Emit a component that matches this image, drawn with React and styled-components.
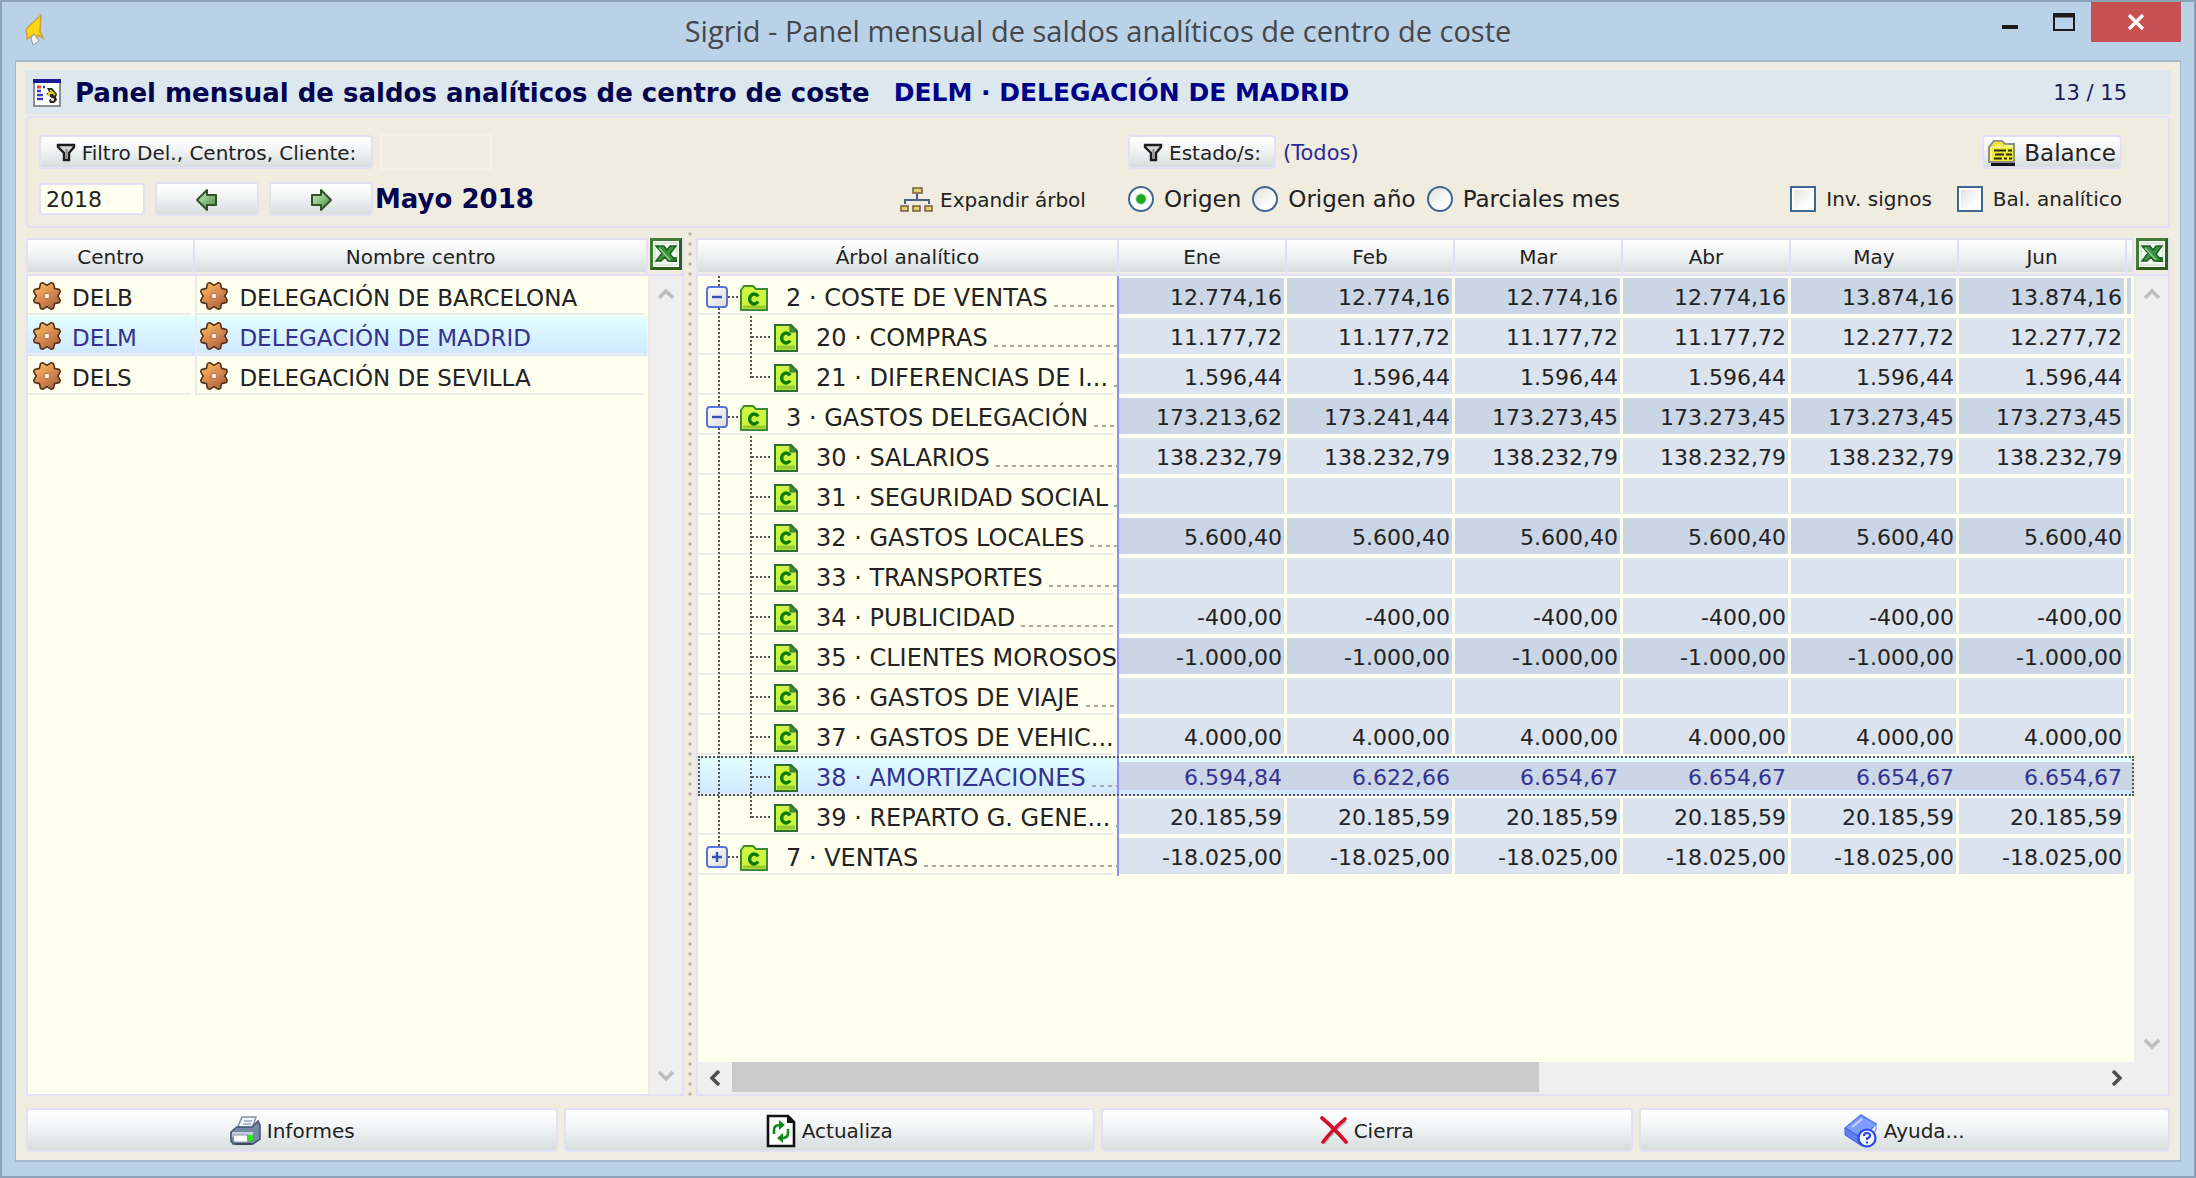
import React, { useState } from "react";
import styled, { createGlobalStyle, css } from "styled-components";

const ivory = "#fffff0";
const beige = "#f0ede0";
const lavender = "#e2e0f6";
const face = "linear-gradient(#ffffff, #f4f5f6 40%, #d5dedd)";
const selection = "linear-gradient(#e3ffff, #cfe6ff)";

const GlobalStyle = createGlobalStyle`
  * { box-sizing: border-box; }
  body {
    margin: 0;
    font-family: "DejaVu Sans", Verdana, sans-serif;
    font-size: 22px;
    color: #222222;
  }
  button, input { font: inherit; color: inherit; margin: 0; }
`;

/* ---------- window frame ---------- */

const Window = styled.div`
  display: flex;
  flex-direction: column;
  height: 100vh;
  min-width: 1800px;
  padding: 0 13px 14px;
  background: #bad2e8;
  border: 2px solid #8ba2b8;
`;

const TitleBar = styled.header`
  display: grid;
  grid-template-columns: 1fr auto 1fr;
  flex: none;
  height: 58px;
`;

const AppMark = styled.div`
  padding: 10px 0 0 8px;
`;

const WindowTitle = styled.h1`
  margin: 0;
  font-family: "Open Sans", "Segoe UI", sans-serif;
  font-size: 29px;
  font-weight: 400;
  line-height: 58px;
  color: #44484c;
`;

const WindowControls = styled.div`
  display: flex;
  justify-content: flex-end;
  align-items: flex-start;
`;

const ControlButton = styled.button`
  display: flex;
  align-items: center;
  justify-content: center;
  width: ${(p) => (p.$close ? 90 : 54)}px;
  height: 40px;
  padding: 0;
  border: 0;
  color: ${(p) => (p.$close ? "#ffffff" : "#1c1c1c")};
  background: ${(p) => (p.$close ? "#c75050" : "transparent")};
`;

const Client = styled.main`
  display: flex;
  flex-direction: column;
  flex: 1;
  min-height: 0;
  padding: 8px 9px;
  background: ${beige};
  border: 2px solid #a3b9cc;
  border-width: 2px 1px;
`;

/* ---------- heading ---------- */

const Heading = styled.div`
  display: flex;
  align-items: center;
  flex: none;
  height: 44px;
  padding: 2px 44px 0 8px;
  background: #dce8ee;
`;

const PanelTitle = styled.h2`
  margin: 0 24px 0 14px;
  font-size: 26px;
  line-height: 32px;
  color: #04044e;
`;

const Subject = styled.strong`
  flex: 1;
  font-size: 25px;
  line-height: 32px;
  color: #000088;
`;

const Counter = styled.span`
  font-size: 21px;
  color: #1a1a5c;
`;

/* ---------- filter bar ---------- */

const Filters = styled.section`
  display: grid;
  grid-template-columns: 861fr 228fr 994fr;
  grid-template-rows: 36px 34px;
  row-gap: 12px;
  align-items: center;
  flex: none;
  height: 112px;
  margin: 2px 1px 0;
  padding: 16px 46px 10px 11px;
  border: 2px solid ${lavender};
  border-radius: 4px;
`;

const Group = styled.div`
  display: flex;
  align-items: center;
  justify-content: ${(p) => (p.$spread ? "space-between" : "flex-start")};
  gap: ${(p) => p.$gap || 10}px;
  grid-column: ${(p) => p.$column};
  white-space: nowrap;
`;

const PushButton = styled.button`
  display: flex;
  align-items: center;
  justify-content: center;
  gap: ${(p) => (p.$large ? 8 : 6)}px;
  min-width: ${(p) => p.$width || 0}px;
  height: 34px;
  padding: ${(p) => (p.$large ? "2px 4px 0" : "2px 8px 0")};
  font-size: ${(p) => (p.$large ? 23 : 20)}px;
  line-height: 28px;
  white-space: nowrap;
  background: ${face};
  border: 2px solid ${lavender};
  border-radius: 4px;
`;

const PlainButton = styled(PushButton)`
  justify-content: flex-start;
  padding: 2px 0 0;
  background: none;
  border: 0;
`;

const TextInput = styled.input`
  width: ${(p) => p.$width}px;
  height: ${(p) => (p.$flat ? 36 : 32)}px;
  padding: 0 5px;
  background: ${(p) => (p.$flat ? "transparent" : ivory)};
  border: 2px solid ${(p) => (p.$flat ? "#f5f2e8" : lavender)};
  border-radius: 4px;
`;

const Period = styled.strong`
  margin-left: -8px;
  font-size: 26px;
  line-height: 32px;
  color: #04044e;
`;

const StateValue = styled.span`
  padding-top: 2px;
  font-size: 21px;
  color: #2a2a9c;
`;

const Choice = styled.label`
  display: flex;
  align-items: center;
  gap: 10px;
  font-size: ${(p) => (p.$small ? 20 : 23)}px;
  line-height: 28px;
`;

const boxLook = css`
  appearance: none;
  flex: none;
  width: 26px;
  height: 26px;
  border: 2px solid #3d6892;
`;

const Radio = styled.input.attrs({ type: "radio" })`
  ${boxLook}
  border-radius: 50%;
  background: linear-gradient(135deg, #dcdcd8, #ffffff 70%);
  &:checked {
    background: radial-gradient(circle, #1fa81f 0 4px, #8fd88f 5px, #ffffff 6px);
  }
`;

const Check = styled.input.attrs({ type: "checkbox" })`
  ${boxLook}
  background: linear-gradient(135deg, #dcdcd8, #ffffff 70%);
  box-shadow: inset 0 0 0 2px #ffffff;
  &:checked { background: #1fa81f; }
`;

/* ---------- data panels ---------- */

const Workspace = styled.div`
  display: flex;
  flex: 1;
  min-height: 0;
  margin: 0 1px;
`;

const Panel = styled.section`
  display: flex;
  flex-direction: column;
  flex: ${(p) => (p.$width ? `0 0 ${p.$width}px` : "1")};
  min-width: 0;
  margin-top: 10px;
  background: ${beige};
  border: solid ${lavender};
  border-width: 0 2px 2px;
`;

const PanelTop = styled.div`
  display: flex;
  flex: 1;
  min-height: 0;
`;

const Sheet = styled.div`
  flex: 1;
  min-width: 0;
  overflow: hidden;
  background: ${ivory};
`;

const Side = styled.div`
  display: flex;
  flex-direction: column;
  flex: none;
  width: 34px;
`;

const ExcelButton = styled.button`
  display: block;
  flex: none;
  width: 34px;
  height: 38px;
  padding: 0 0 4px 1px;
  line-height: 0;
  background: none;
  border: 0;
  border-bottom: 2px solid ${lavender};
`;

const VerticalTrack = styled.div`
  display: flex;
  flex-direction: column;
  justify-content: space-between;
  flex: 1;
  margin-left: 2px;
  background: #efefef;
`;

const HorizontalTrack = styled.div`
  display: flex;
  flex: none;
  height: 32px;
  padding-right: 34px;
  background: #efefef;
`;

const ArrowButton = styled.button`
  display: flex;
  align-items: center;
  justify-content: center;
  flex: none;
  width: ${(p) => (p.$wide ? 34 : 32)}px;
  height: ${(p) => (p.$wide ? 32 : 36)}px;
  padding: 0;
  background: none;
  border: 0;
`;

const Slot = styled.div`
  flex: 1;
  height: 30px;
`;

const Thumb = styled.div`
  width: 59%;
  height: 100%;
  background: #cbcbcb;
`;

const Splitter = styled.div`
  flex: none;
  width: 12px;
  margin-top: 4px;
  background: radial-gradient(circle at 6px 2px, #b4b0a4 0 1px, transparent 2px) 0 0 / 12px 10px repeat-y;
`;

const Grid = styled.table`
  width: 100%;
  table-layout: fixed;
  border-collapse: separate;
  border-spacing: 0;
`;

const Head = styled.th`
  height: 38px;
  padding: 0;
  font-size: 20px;
  font-weight: 400;
  line-height: 30px;
  background: ${face} 0 0 / 100% 32px no-repeat ${beige};
  border: solid ${lavender};
  border-width: 2px 2px 2px 0;
`;

const Row = styled.tr`
  color: ${(p) => (p.$selected ? "#33338f" : "inherit")};
  background: ${(p) => (p.$selected ? selection : "none")};
  ${(p) => p.$focused && "outline: 2px dotted #555555; outline-offset: -2px;"}
`;

const CentreCell = styled.td`
  height: 40px;
  padding: 0;
  border-left: ${(p) => (p.$divided ? "2px solid #ececec" : "0")};
`;

const CentreLabel = styled.div`
  display: flex;
  align-items: center;
  gap: 10px;
  height: 40px;
  padding-left: ${(p) => (p.$near ? 2 : 4)}px;
  font-size: 23px;
  line-height: 32px;
  white-space: nowrap;
  background: linear-gradient(#ebebeb, #ebebeb) 0 37px / calc(100% - 4px) 2px no-repeat;
  span { padding-top: 4px; }
`;

const TreeCell = styled.td`
  height: 40px;
  padding: 0;
  border-right: 2px solid #8f8ff8;
`;

const TreeLabel = styled.div`
  display: flex;
  align-items: center;
  height: 40px;
  font-size: 24px;
  line-height: 32px;
  white-space: nowrap;
  overflow: hidden;
  background: linear-gradient(#ebebeb, #ebebeb) 0 37px / calc(100% - 4px) 2px no-repeat;
  > svg { flex: none; margin-top: 4px; }
`;

const dotsDown = "repeating-linear-gradient(#555 0 2px, transparent 2px 4px)";
const dotsAcross = "repeating-linear-gradient(90deg, #555 0 2px, transparent 2px 4px)";

const RootGuide = styled.span`
  display: flex;
  align-items: center;
  flex: none;
  width: 42px;
  height: 40px;
  padding: 2px 0 0 8px;
  background:
    ${dotsDown} 20px 0 / 2px ${(p) => (p.$ends ? "20px" : "40px")} no-repeat,
    ${dotsAcross} 30px 20px / ${(p) => (p.$node ? 12 : 0)}px 2px no-repeat;
`;

const BranchGuide = styled.span`
  flex: none;
  width: 34px;
  height: 40px;
  background:
    ${dotsDown} 10px 0 / 2px ${(p) => (p.$ends ? "22px" : "40px")} no-repeat,
    ${dotsAcross} 12px 20px / 20px 2px no-repeat;
`;

const Expander = styled.button`
  display: block;
  width: 22px;
  height: 22px;
  padding: 0;
  line-height: 0;
  background: linear-gradient(135deg, #ffffff, #dcdcdc);
  border: 2px solid #5577dd;
  border-radius: 4px;
`;

const TreeText = styled.span`
  flex: none;
  margin: 4px 6px 0 18px;
`;

const Leader = styled.span`
  flex: 1;
  align-self: flex-end;
  height: 2px;
  margin-bottom: 9px;
  background: repeating-linear-gradient(90deg, #aaaaa4 0 4px, transparent 4px 8px);
`;

const Amount = styled.td`
  height: 40px;
  padding: 4px 2px 0 0;
  line-height: 24px;
  text-align: right;
  white-space: nowrap;
  background: ${(p) => (p.$dark ? "#cad5e5" : "#dbe3ee")};
  background-clip: padding-box;
  border: solid transparent;
  border-width: ${(p) => (p.$selected ? "6px 0" : "2px 3px 2px 0")};
  ${(p) => p.$selected && "padding-right: 5px;"}
`;

/* ---------- bottom bar ---------- */

const Actions = styled.footer`
  display: grid;
  grid-template-columns: repeat(4, 1fr);
  gap: 6px;
  flex: none;
  margin: 12px 1px 0;
`;

const ActionButton = styled(PushButton)`
  height: 44px;
`;

/* ---------- drawings ---------- */

const FlameIcon = () => (
  <svg width="24" height="38" viewBox="0 0 24 36" aria-hidden="true">
    <path d="M18 2 L5 14 Q2 17 4 21 L4 26 L10 22 L13 26 L15 22 L20 25 L17 18 Z" fill="#ffd416" stroke="#c9a23c" strokeWidth="1.5" />
    <path d="M8 25 L11 21 L16 28 L10 32 Z" fill="#f4f6f8" stroke="#8f9ba6" />
  </svg>
);

const ReportIcon = () => (
  <svg width="28" height="28" viewBox="0 0 28 28" aria-hidden="true">
    <rect x="1" y="1" width="26" height="26" fill="#fff" stroke="#8c8c94" strokeWidth="2" />
    <rect x="0" y="0" width="28" height="4" fill="#1c1c96" />
    <path d="M4 8h4" stroke="#f04040" strokeWidth="3" />
    <path d="M4 12h4M4 16h6M4 20h6M10 8h2" stroke="#3a3ab8" strokeWidth="2.4" />
    <path d="M14 9h5l5 6-1 3 1 3-3 3h-4l-1-3 3-2-6-4 3-2z" fill="#26261c" />
    <path d="M15 14h4M17 11l5 5M14 16h3" stroke="#d8d040" strokeWidth="1.800" />
    <circle cx="19.500" cy="20.500" r="1.6" fill="#fff" />
  </svg>
);

const FunnelIcon = () => (
  <svg width="20" height="20" viewBox="0 0 20 20" aria-hidden="true">
    <path d="M2 2h16v2l-5 6v7H8v-7L2 4z" fill="#d8d8d8" stroke="#1c1c1c" strokeWidth="2.4" />
    <path d="M10.500 6v10" stroke="#8a8a8a" strokeWidth="2" />
  </svg>
);

const Arrow = ({ flip }) => (
  <svg width="24" height="24" viewBox="0 0 24 24" aria-hidden="true">
    <defs>
      <linearGradient id={flip ? "arrowL" : "arrowR"} x1="0" y1="0" x2="1" y2="1">
        <stop offset="0" stopColor="#d4f0c8" />
        <stop offset="1" stopColor="#3f8f34" />
      </linearGradient>
    </defs>
    <path
      d={flip ? "M2 12L12 2v5h9v10h-9v5z" : "M22 12L12 2v5H3v10h9v5z"}
      fill={`url(#${flip ? "arrowL" : "arrowR"})`}
      stroke="#34502e"
      strokeWidth="2"
      strokeLinejoin="round"
    />
  </svg>
);

const HierarchyIcon = () => (
  <svg width="34" height="26" viewBox="0 0 34 26" aria-hidden="true">
    <path d="M17 7v6M5 17v-4h24v4" stroke="#4b5f80" strokeWidth="2" fill="none" />
    <g fill="#e2cf74" stroke="#7d654a" strokeWidth="1.600">
      <rect x="13" y="1" width="9" height="5" />
      <rect x="1" y="19" width="7" height="5" />
      <rect x="13" y="19" width="7" height="5" />
      <rect x="25" y="19" width="7" height="5" />
    </g>
  </svg>
);

const BalanceIcon = () => (
  <svg width="28" height="28" viewBox="0 0 28 28" aria-hidden="true">
    <path d="M1 23V8l5-6h8l3 3h9v18z" fill="#f3f38a" stroke="#8d8d8d" strokeWidth="2" />
    <path d="M5 7l3-3h5l3 3" fill="none" stroke="#e6e000" strokeWidth="3" strokeDasharray="2 1" />
    <rect x="4" y="9" width="21" height="13" fill="#ecec38" />
    <path d="M6 11.500h12M20 11.500h4M7 15.500h9M18 15.500h6M6 19.500h8M16 19.500h3M21 19.500h3" stroke="#2a2a10" strokeWidth="2.2" />
    <path d="M3 25.500h24" stroke="#111" strokeWidth="3" />
  </svg>
);

const ExcelIcon = () => (
  <svg width="32" height="32" viewBox="0 0 32 32" aria-hidden="true">
    <rect x="0" y="0" width="32" height="32" fill="#3f7d36" />
    <path d="M32 0v32H0l3-3h26V3z" fill="#2a5f1c" />
    <rect x="3" y="3" width="26" height="26" fill="#fff" />
    <rect x="5" y="5" width="22" height="22" fill="#f1f8f0" stroke="#c4dcc0" />
    <path d="M18 19h9v5h-6z" fill="#2c7a34" />
    <path d="M6 8h8l3 4 3-4h6l-6 8 6 7h-8l-3-4-4 4H6l6-8z" fill="#3d9440" stroke="#1d5c24" strokeWidth="1.400" />
    <path d="M9 10l11 12" stroke="#8ccc88" strokeWidth="1.500" />
  </svg>
);

const GEAR = Array.from({ length: 40 }, (_, i) => {
  const r = [14, 14, 12, 10.8, 12][i % 5];
  const a = ((i - 0.5) * Math.PI) / 20 + Math.PI / 8;
  return `${(15 + r * Math.cos(a)).toFixed(1)},${(15 + r * Math.sin(a)).toFixed(1)}`;
}).join(" ");

const GearIcon = () => (
  <svg width="30" height="30" viewBox="0 0 30 30" aria-hidden="true">
    <defs>
      <linearGradient id="copper" x1="0.1" y1="0" x2="0.8" y2="1">
        <stop offset="0" stopColor="#ffc45c" />
        <stop offset="0.5" stopColor="#d98a50" />
        <stop offset="1" stopColor="#a8643c" />
      </linearGradient>
    </defs>
    <polygon points={GEAR} fill="url(#copper)" stroke="#55321c" strokeWidth="1.6" strokeLinejoin="round" />
    <circle cx="15" cy="15" r="2.800" fill="#fff6e8" stroke="#b07850" />
  </svg>
);

const LetterC = ({ x, y }) => (
  <path d={`M${x + 9} ${y + 3.500}A4.500 5 0 1 0 ${x + 9} ${y + 8.500}`} fill="none" stroke="#0a7a0a" strokeWidth="3.400" />
);

const FolderIcon = () => (
  <svg width="28" height="26" viewBox="0 0 28 26" aria-hidden="true">
    <path d="M1 25V5l3-4h9l3 3h11v21z" fill="#cdf53e" stroke="#3f8a34" strokeWidth="2" />
    <path d="M3 22h23" stroke="#94cc30" strokeWidth="3" />
    <LetterC x={9} y={8} />
  </svg>
);

const LeafIcon = () => (
  <svg width="24" height="28" viewBox="0 0 24 28" aria-hidden="true">
    <path d="M1 1h16l6 6v20H1z" fill="#cdf53e" stroke="#2f6e34" strokeWidth="2" />
    <path d="M16 1v7h7z" fill="#4a8c3a" stroke="#2f6e34" />
    <path d="M3 23.500h18" stroke="#94cc30" strokeWidth="4" />
    <LetterC x={7} y={8} />
  </svg>
);

const PrinterIcon = () => (
  <svg width="32" height="32" viewBox="0 0 32 32" aria-hidden="true">
    <path d="M8 14L13 2h14l-4 12z" fill="#f2f6fb" stroke="#8492a8" strokeWidth="1.5" />
    <path d="M15 6h8M14 9h8" stroke="#9aa8bc" strokeWidth="1.500" />
    <path d="M2 17l6-5h15l6-6 2 4v14l-7 5H4l-2-3z" fill="#7688a4" stroke="#42516a" strokeWidth="1.5" />
    <path d="M3 17h21v5H3z" fill="#c2cedd" />
    <path d="M4 20h15v7H5z" fill="#fff" stroke="#8492a8" />
    <rect x="18" y="20" width="6" height="6" fill="#2fe01c" />
    <path d="M6 29h17" stroke="#3c4a60" strokeWidth="2" />
  </svg>
);

const RefreshIcon = () => (
  <svg width="30" height="34" viewBox="0 0 30 34" aria-hidden="true">
    <path d="M2 2h20l6 6v24H2z" fill="#fff" stroke="#111" strokeWidth="2.600" />
    <path d="M21 2v7h7z" fill="#111" />
    <path d="M8 20v-4q0-5 6-5M22 15v4q0 5-6 5" fill="none" stroke="#0c8c14" strokeWidth="2.600" />
    <path d="M13 6l6 5-6 5zM17 19l-6 5 6 5z" fill="#0c8c14" />
  </svg>
);

const CrossIcon = () => (
  <svg width="28" height="30" viewBox="0 0 28 30" aria-hidden="true">
    <path d="M4 27Q14 14 26 5" fill="none" stroke="#777" strokeWidth="3" opacity="0.5" />
    <path d="M2 2Q14 12 26 26" fill="none" stroke="#d40f2c" strokeWidth="3.600" strokeLinecap="round" />
    <path d="M25 3Q12 14 3 26" fill="none" stroke="#d40f2c" strokeWidth="3.600" strokeLinecap="round" />
  </svg>
);

const HelpIcon = () => (
  <svg width="34" height="34" viewBox="0 0 34 34" aria-hidden="true">
    <path d="M1 14L17 1l15 9-13 15z" fill="#7f9cff" stroke="#5a7af0" strokeWidth="1.500" />
    <path d="M1 14v7l17 11 1-7z" fill="#5c80f4" stroke="#3f62dc" />
    <path d="M19 25L32 10v6L20 31z" fill="#dfe6ff" stroke="#5a7af0" />
    <path d="M8 13l10-8" stroke="#c6d3ff" strokeWidth="2" />
    <circle cx="23" cy="24" r="8.500" fill="#f4f7ff" stroke="#2448e0" strokeWidth="2.200" />
    <path d="M20 22q0-3 3-3t3 2.500q0 2-3 3v1.500M23 27.500v2" fill="none" stroke="#2448e0" strokeWidth="2.200" />
  </svg>
);

const Chevron = ({ dir, color }) => {
  const turn = { up: 0, right: 90, down: 180, left: 270 }[dir];
  return (
    <svg width="20" height="20" viewBox="0 0 20 20" aria-hidden="true">
      <path d="M3 14L10 7l7 7" fill="none" stroke={color} strokeWidth="3.600" transform={`rotate(${turn} 10 10)`} />
    </svg>
  );
};

const ExpandMark = ({ open }) => (
  <svg width="18" height="18" viewBox="0 0 18 18" aria-hidden="true">
    <path d={open ? "M4 9h10" : "M4 9h10M9 4v10"} stroke="#2f50b4" strokeWidth="2.400" />
  </svg>
);

const MinimizeMark = () => (
  <svg width="18" height="18" viewBox="0 0 18 18" aria-hidden="true">
    <path d="M1 14h16" stroke="currentColor" strokeWidth="4" />
  </svg>
);

const MaximizeMark = () => (
  <svg width="22" height="18" viewBox="0 0 22 18" aria-hidden="true">
    <rect x="1" y="1" width="20" height="16" fill="none" stroke="currentColor" strokeWidth="2" />
    <path d="M0 2.500h22" stroke="currentColor" strokeWidth="4" />
  </svg>
);

const CloseMark = () => (
  <svg width="18" height="16" viewBox="0 0 18 16" aria-hidden="true">
    <path d="M2 1l14 14M16 1L2 15" stroke="currentColor" strokeWidth="3.400" />
  </svg>
);

/* ---------- data ---------- */

const centres = [
  ["DELB", "DELEGACIÓN DE BARCELONA"],
  ["DELM", "DELEGACIÓN DE MADRID"],
  ["DELS", "DELEGACIÓN DE SEVILLA"],
];

const months = ["Ene", "Feb", "Mar", "Abr", "May", "Jun"];
const same = (v) => months.map(() => v);

const accounts = [
  { label: "2 · COSTE DE VENTAS", open: true, values: ["12.774,16", "12.774,16", "12.774,16", "12.774,16", "13.874,16", "13.874,16"] },
  { label: "20 · COMPRAS", child: true, values: ["11.177,72", "11.177,72", "11.177,72", "11.177,72", "12.277,72", "12.277,72"] },
  { label: "21 · DIFERENCIAS DE I...", child: true, last: true, values: same("1.596,44") },
  { label: "3 · GASTOS DELEGACIÓN", open: true, values: ["173.213,62", "173.241,44", "173.273,45", "173.273,45", "173.273,45", "173.273,45"] },
  { label: "30 · SALARIOS", child: true, values: same("138.232,79") },
  { label: "31 · SEGURIDAD SOCIAL", child: true, values: same("") },
  { label: "32 · GASTOS LOCALES", child: true, values: same("5.600,40") },
  { label: "33 · TRANSPORTES", child: true, values: same("") },
  { label: "34 · PUBLICIDAD", child: true, values: same("-400,00") },
  { label: "35 · CLIENTES MOROSOS", child: true, values: same("-1.000,00") },
  { label: "36 · GASTOS DE VIAJE", child: true, values: same("") },
  { label: "37 · GASTOS DE VEHIC...", child: true, values: same("4.000,00") },
  { label: "38 · AMORTIZACIONES", child: true, selected: true, values: ["6.594,84", "6.622,66", "6.654,67", "6.654,67", "6.654,67", "6.654,67"] },
  { label: "39 · REPARTO G. GENE...", child: true, last: true, values: same("20.185,59") },
  { label: "7 · VENTAS", last: true, values: same("-18.025,00") },
];

/* ---------- composed parts ---------- */

const SideBar = () => (
  <Side>
    <ExcelButton aria-label="Excel"><ExcelIcon /></ExcelButton>
    <VerticalTrack>
      <ArrowButton aria-label="Subir"><Chevron dir="up" color="#bdbdbd" /></ArrowButton>
      <ArrowButton aria-label="Bajar"><Chevron dir="down" color="#bdbdbd" /></ArrowButton>
    </VerticalTrack>
  </Side>
);

const CentresPanel = () => {
  const [current, setCurrent] = useState("DELM");
  return (
    <Panel $width={658}>
      <PanelTop>
        <Sheet>
          <Grid>
            <colgroup><col style={{ width: "27%" }} /><col /></colgroup>
            <thead>
              <tr><Head>Centro</Head><Head>Nombre centro</Head></tr>
            </thead>
            <tbody>
              {centres.map(([code, name]) => (
                <Row key={code} $selected={code === current} onClick={() => setCurrent(code)}>
                  <CentreCell><CentreLabel><GearIcon /><span>{code}</span></CentreLabel></CentreCell>
                  <CentreCell $divided><CentreLabel $near><GearIcon /><span>{name}</span></CentreLabel></CentreCell>
                </Row>
              ))}
            </tbody>
          </Grid>
        </Sheet>
        <SideBar />
      </PanelTop>
    </Panel>
  );
};

const AccountRow = ({ account, dark }) => {
  const { label, child, open, last, selected, values } = account;
  return (
    <Row $selected={selected} $focused={selected}>
      <TreeCell>
        <TreeLabel>
          <RootGuide $node={!child} $ends={!child && last}>
            {!child && (
              <Expander aria-label={open ? "Contraer" : "Expandir"}><ExpandMark open={open} /></Expander>
            )}
          </RootGuide>
          {child && <BranchGuide $ends={last} />}
          {child ? <LeafIcon /> : <FolderIcon />}
          <TreeText>{label}</TreeText>
          <Leader />
        </TreeLabel>
      </TreeCell>
      {values.map((v, i) => (
        <Amount key={i} $dark={dark} $selected={selected}>{v}</Amount>
      ))}
      <Amount $dark={dark} $selected={selected} />
    </Row>
  );
};

const AccountsPanel = () => (
  <Panel>
    <PanelTop>
      <Sheet>
        <Grid>
          <colgroup>
            <col style={{ width: 421 }} />
            {months.map((m) => <col key={m} style={{ width: 168 }} />)}
            <col />
          </colgroup>
          <thead>
            <tr>
              <Head>Árbol analítico</Head>
              {months.map((m) => <Head key={m}>{m}</Head>)}
              <Head />
            </tr>
          </thead>
          <tbody>
            {accounts.map((a, i) => <AccountRow key={a.label} account={a} dark={i % 3 === 0} />)}
          </tbody>
        </Grid>
      </Sheet>
      <SideBar />
    </PanelTop>
    <HorizontalTrack>
      <ArrowButton $wide aria-label="Izquierda"><Chevron dir="left" color="#505050" /></ArrowButton>
      <Slot><Thumb /></Slot>
      <ArrowButton $wide aria-label="Derecha"><Chevron dir="right" color="#505050" /></ArrowButton>
    </HorizontalTrack>
  </Panel>
);

const FilterBar = () => (
  <Filters>
    <Group $column="1" $gap={7}>
      <PushButton $width={334}><FunnelIcon />Filtro Del., Centros, Cliente:</PushButton>
      <TextInput $flat $width={112} aria-label="Filtro" />
    </Group>
    <Group $column="3" $spread>
      <Group $gap={7}>
        <PushButton $width={148}><FunnelIcon />Estado/s:</PushButton>
        <StateValue>(Todos)</StateValue>
      </Group>
      <PushButton $large><BalanceIcon />Balance</PushButton>
    </Group>
    <Group $column="1">
      <TextInput $width={106} defaultValue="2018" aria-label="Año" />
      <PushButton $width={104} aria-label="Mes anterior"><Arrow flip /></PushButton>
      <PushButton $width={104} aria-label="Mes siguiente"><Arrow /></PushButton>
      <Period>Mayo 2018</Period>
    </Group>
    <Group $column="2">
      <PlainButton><HierarchyIcon />Expandir árbol</PlainButton>
    </Group>
    <Group $column="3" $spread>
      <Group $gap={11}>
        <Choice><Radio name="modo" defaultChecked />Origen</Choice>
        <Choice><Radio name="modo" />Origen año</Choice>
        <Choice><Radio name="modo" />Parciales mes</Choice>
      </Group>
      <Group $gap={25}>
        <Choice $small><Check />Inv. signos</Choice>
        <Choice $small><Check />Bal. analítico</Choice>
      </Group>
    </Group>
  </Filters>
);

export default function App() {
  return (
    <>
      <GlobalStyle />
      <Window>
        <TitleBar>
          <AppMark><FlameIcon /></AppMark>
          <WindowTitle>Sigrid - Panel mensual de saldos analíticos de centro de coste</WindowTitle>
          <WindowControls>
            <ControlButton aria-label="Minimizar"><MinimizeMark /></ControlButton>
            <ControlButton aria-label="Maximizar"><MaximizeMark /></ControlButton>
            <ControlButton $close aria-label="Cerrar"><CloseMark /></ControlButton>
          </WindowControls>
        </TitleBar>
        <Client>
          <Heading>
            <ReportIcon />
            <PanelTitle>Panel mensual de saldos analíticos de centro de coste</PanelTitle>
            <Subject>DELM · DELEGACIÓN DE MADRID</Subject>
            <Counter>13 / 15</Counter>
          </Heading>
          <FilterBar />
          <Workspace>
            <CentresPanel />
            <Splitter />
            <AccountsPanel />
          </Workspace>
          <Actions>
            <ActionButton><PrinterIcon />Informes</ActionButton>
            <ActionButton><RefreshIcon />Actualiza</ActionButton>
            <ActionButton><CrossIcon />Cierra</ActionButton>
            <ActionButton><HelpIcon />Ayuda...</ActionButton>
          </Actions>
        </Client>
      </Window>
    </>
  );
}
